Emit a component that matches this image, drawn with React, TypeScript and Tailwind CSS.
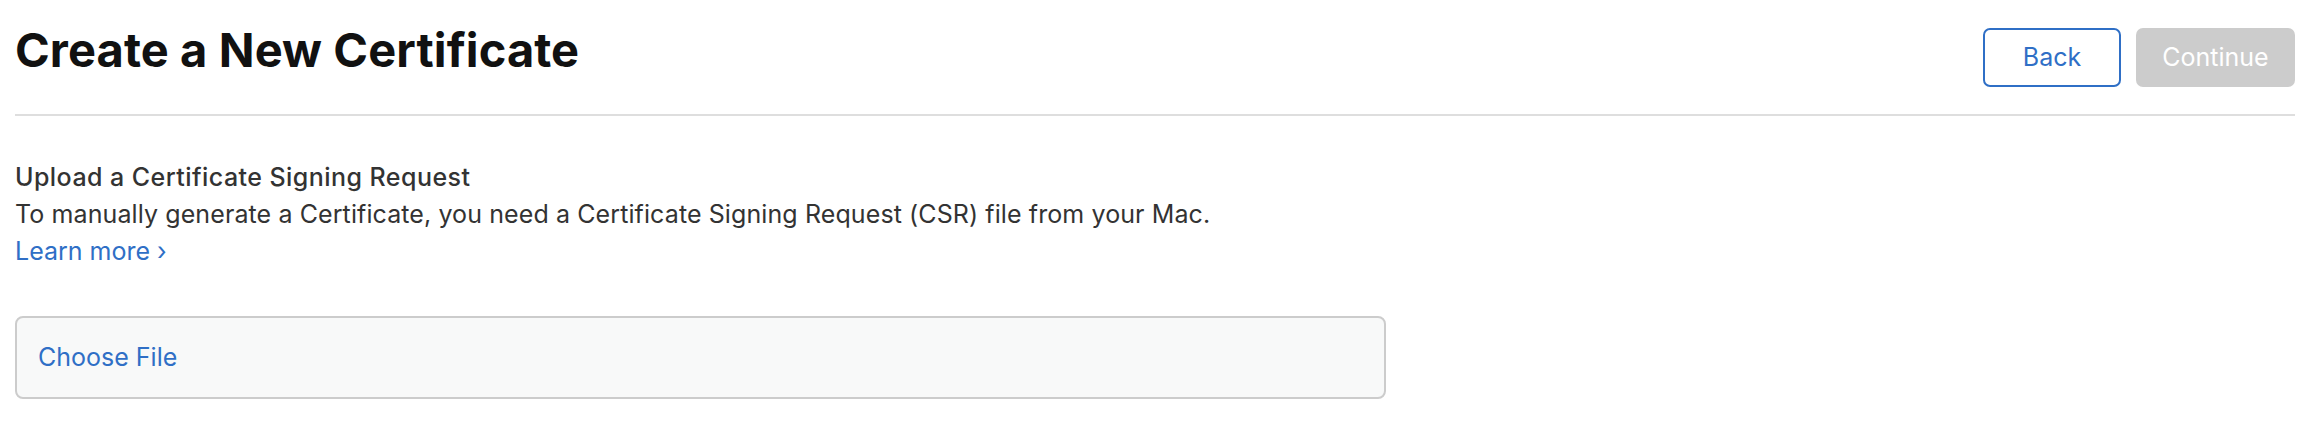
import React from 'react';

const App: React.FC = () => {
  return (
    <div className="min-h-[432px] bg-white font-['Inter','Noto_Sans',sans-serif] text-[#333333]">
      <div className="ml-[15px] mr-[11px]">
        <div className="flex items-start justify-between pt-[22px]">
          <h1 className="text-[47px] leading-[56px] font-bold tracking-[0.1px] text-[#111111]">Create a New Certificate</h1>
          <div className="mt-[6px] flex gap-[15px]">
            <button className="h-[59px] w-[138px] rounded-[7px] border-2 border-[#2f6fc6] bg-white text-[25px] text-[#2f6fc6]">
              Back
            </button>
            <button className="h-[59px] w-[159px] rounded-[7px] bg-[#cccccc] text-[25px] text-white" disabled>
              Continue
            </button>
          </div>
        </div>
        <div className="mt-[27px] h-[2px] bg-[#dedede]" />

        <div className="mt-[43px] text-[25px] leading-[37px]">
          <h2 className="font-medium tracking-[0.45px] text-[#333333]">Upload a Certificate Signing Request</h2>
          <p className="tracking-[0.1px]">
            To manually generate a Certificate, you need a Certificate Signing Request (CSR) file from your Mac.
          </p>
          <a href="#" className="text-[#2f6fc6]">
            Learn more ›
          </a>
        </div>

        <div className="mt-[46px] flex h-[83px] w-[1371px] items-center rounded-[8px] border-2 border-[#cccccc] bg-[#f8f9f9] pl-[21px]">
          <span className="text-[25px] text-[#2f6fc6]">Choose File</span>
        </div>
      </div>
    </div>
  );
};

export default App;
